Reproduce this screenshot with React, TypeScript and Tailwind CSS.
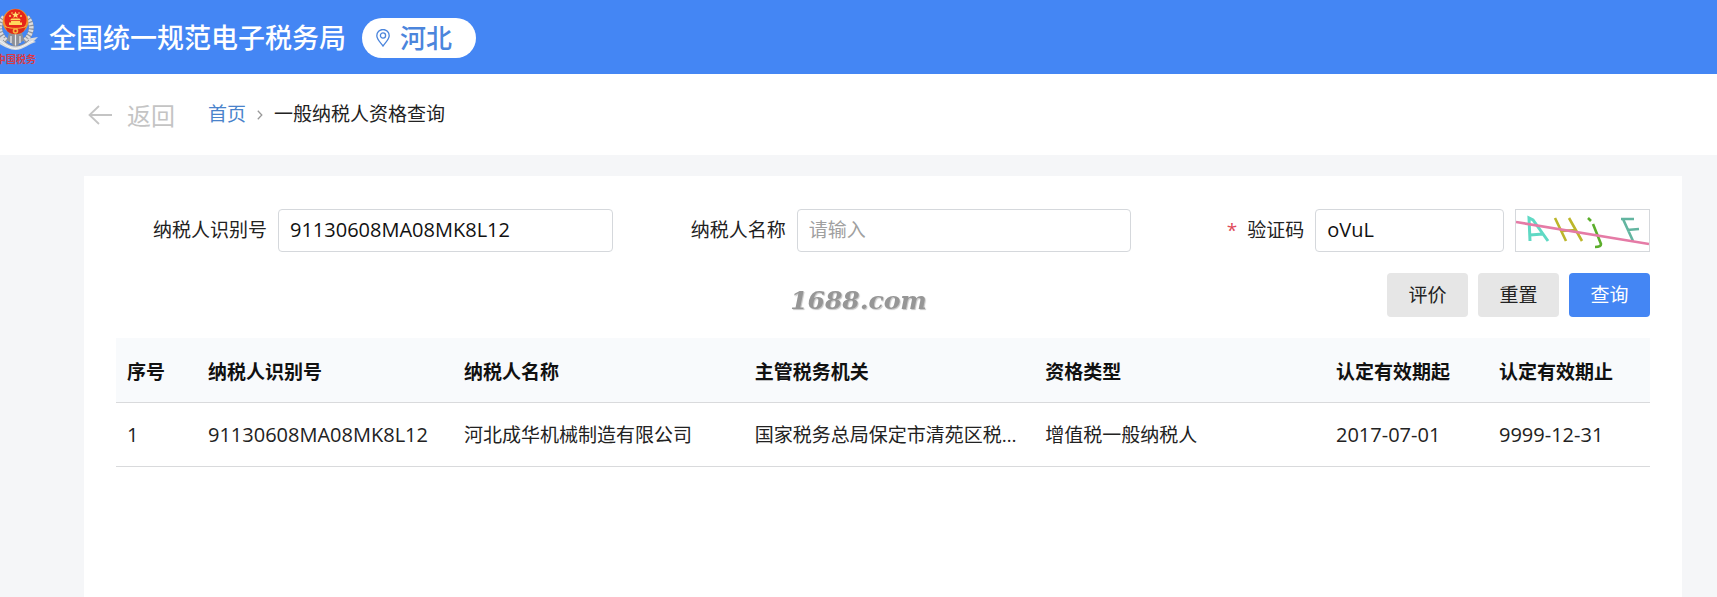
import { useState } from "react";

const columns = [
  { label: "序号", width: "w-[81px]" },
  { label: "纳税人识别号", width: "w-64" },
  { label: "纳税人名称", width: "" },
  { label: "主管税务机关", width: "" },
  { label: "资格类型", width: "" },
  { label: "认定有效期起", width: "w-[163px]" },
  { label: "认定有效期止", width: "w-[162px]" },
];

const rows = [
  [
    "1",
    "91130608MA08MK8L12",
    "河北成华机械制造有限公司",
    "国家税务总局保定市清苑区税务局",
    "增值税一般纳税人",
    "2017-07-01",
    "9999-12-31",
  ],
];

function Emblem() {
  return (
    <svg viewBox="0 0 40 74" className="h-[74px] w-10" role="img" aria-label="中国税务">
      <g fill="none">
        <path d="M4 17C-3 25-1 35 7 41" stroke="#8f9299" strokeWidth="5" />
        <path d="M27 17C34 25 32 35 24 41" stroke="#8f9299" strokeWidth="5" />
        <path d="M4 17C-3 25-1 35 7 41" stroke="#dcdde1" strokeWidth="4.500" strokeDasharray="2.200 1.200" />
        <path d="M27 17C34 25 32 35 24 41" stroke="#dcdde1" strokeWidth="4.500" strokeDasharray="2.200 1.200" />
      </g>
      <path d="M9 33H22L24 40 15.500 47 7 40Z" fill="#8e9198" />
      <path d="M15.500 34V47M11 36V43M20 36V43" stroke="#e9eaed" strokeWidth="1.200" />
      <path d="M-6 37 5 38 3 40C7 44 11 46 15.500 46S25 44 29 40L26 39 38 37 34 41 36 42C30 43 23 50 15.500 50S1 44-5 42Z" fill="#d9dadd" />
      <path d="M0 41C6 45 10 48.500 15.500 48.500S26 44 33 41" stroke="#f6f6f7" strokeWidth="1" fill="none" />
      <path d="M3 40C7 44 11 46 15.500 46S25 44 29 40" stroke="#7f828a" strokeWidth=".8" fill="none" />
      <circle cx="15.500" cy="21.500" r="12.800" fill="#f0922e" />
      <circle cx="15.500" cy="20.300" r="11" fill="#e6261a" />
      <path d="m15.500 11.500 1 2.200 2.400.2-1.800 1.600.5 2.400-2.100-1.300-2.100 1.300.5-2.400-1.800-1.600 2.400-.2Z" fill="#ffe070" />
      <g fill="#ffd75c">
        <circle cx="10" cy="16" r="1" />
        <circle cx="21" cy="16" r="1" />
        <circle cx="12" cy="13" r=".8" />
        <circle cx="19" cy="13" r=".8" />
        <path d="M11.500 18.500h8l1.500 1.800H10ZM11 21h9v1.500h2v2.500H9v-2.500h2Z" />
      </g>
      <path d="M5 27c6 2.500 15 2.500 21 0l-2.500 4.500c-5 3.500-11 3.500-16 0Z" fill="#dd2a1b" />
      <path d="M5 26.500c6 2.500 15 2.500 21 0" stroke="#f8b23f" strokeWidth="1" fill="none" />
      <circle cx="15.500" cy="31" r="2.800" fill="#f8b23f" />
      <circle cx="15.500" cy="31" r="1.200" fill="#dd2a1b" />
      <text x="-4" y="63" fontSize="10" fontWeight="700" fill="#d93a45" fontFamily="'Noto Sans CJK SC', sans-serif">
        中国税务
      </text>
    </svg>
  );
}

function Captcha() {
  return (
    <svg viewBox="0 0 133 41" className="h-full w-full" role="img" aria-label="验证码图片">
      <g fill="none" strokeWidth="2.600">
        <path d="M14 31 13 8 17 10 32 31M14 25 27 24" stroke="#5fd9c4" strokeWidth="3" />
        <path d="m39 8 11 23M53 8l13 23M46 21l14-1" stroke="#bcb62a" />
        <path d="m72 8 3 3M77 14l8 20q0 3-6 3" stroke="#5cae2c" strokeWidth="2.600" />
        <path d="M105 9h13M107 9l10 22M111 20l12-1" stroke="#62b5a0" />
        <path d="M0 12 133 34" stroke="#e57ba6" />
      </g>
    </svg>
  );
}

const inputClass =
  "h-[43px] w-full min-w-0 rounded border border-[#d5d8dc] bg-white px-[11px] pb-0.5 text-xl text-[#111] outline-none placeholder:text-[19px] placeholder:text-[#a0a0a0]";
const fieldClass = "flex items-center gap-[11px]";
const labelClass = "w-[151px] shrink-0 text-right text-[19px] text-[#222]";
const buttonClass = "h-11 w-[81px] rounded text-[19px]";

export default function App() {
  const [taxId, setTaxId] = useState("91130608MA08MK8L12");
  const [name, setName] = useState("");
  const [code, setCode] = useState("oVuL");

  const reset = () => {
    setTaxId("");
    setName("");
    setCode("");
  };

  return (
    <div className="flex min-h-screen flex-col bg-[#f5f6f8] font-['Open_Sans','Noto_Sans_CJK_SC',sans-serif] text-[#222]">
      <header className="flex h-[74px] items-center bg-[#4486f4]">
        <Emblem />
        <h1 className="ml-[9px] pt-0.5 text-[27px] leading-10 font-medium text-white">全国统一规范电子税务局</h1>
        <button className="mt-0.5 ml-4 flex h-10 items-center gap-2.5 rounded-full bg-white pr-6 pl-3.5 text-[26px] font-medium text-[#4b85dc]">
          <svg viewBox="0 0 14 18" className="h-[18px] w-3.5" fill="none" stroke="currentColor" strokeWidth="1.300">
            <path d="M7 17C4 13 .8 10 .8 6.700a6.200 6.200 0 0 1 12.400 0C13.200 10 10 13 7 17Z" />
            <circle cx="7" cy="6.500" r="2.600" />
          </svg>
          河北
        </button>
      </header>

      <nav className="flex h-[81px] items-center bg-white pl-[88px] text-[19px]">
        <a href="#back" className="flex items-center gap-[15px] text-2xl text-[#c4c4c4]">
          <svg viewBox="0 0 24 20" className="h-5 w-6" fill="none" stroke="currentColor" strokeWidth="1.800">
            <path d="M24 10H1.500M11 1 1.500 10 11 19" />
          </svg>
          <span className="pt-0.5">返回</span>
        </a>
        <a href="#home" className="ml-[33px] text-[#4a83cb]">首页</a>
        <svg viewBox="0 0 6 10" className="mx-[11px] h-2.5 w-1.5" fill="none" stroke="#999" strokeWidth="1.300">
          <path d="m.8.800 4 4.200-4 4.200" />
        </svg>
        <span>一般纳税人资格查询</span>
      </nav>

      <main className="mt-[21px] mr-[35px] ml-[84px] grow bg-white px-8 pt-[33px]">
        <form onSubmit={(e) => e.preventDefault()}>
          <div className="grid grid-cols-3 gap-[22px]">
            <div className={fieldClass}>
              <label htmlFor="tax-id" className={labelClass}>纳税人识别号</label>
              <input id="tax-id" className={inputClass} value={taxId} onChange={(e) => setTaxId(e.target.value)} />
            </div>
            <div className={fieldClass}>
              <label htmlFor="name" className={labelClass}>纳税人名称</label>
              <input
                id="name"
                className={inputClass}
                placeholder="请输入"
                value={name}
                onChange={(e) => setName(e.target.value)}
              />
            </div>
            <div className={fieldClass}>
              <label htmlFor="code" className={labelClass}>
                <span className="mr-2.5 text-[#e04a5a]">*</span>验证码
              </label>
              <input id="code" className={inputClass} value={code} onChange={(e) => setCode(e.target.value)} />
              <button type="button" className="h-[43px] w-[135px] shrink-0 border border-[#d5d8dc] bg-white">
                <Captcha />
              </button>
            </div>
          </div>
          <div className="mt-[21px] flex justify-end gap-2.5">
            <button type="button" className={`${buttonClass} bg-[#e6e6e6]`}>评价</button>
            <button type="button" onClick={reset} className={`${buttonClass} bg-[#e6e6e6]`}>重置</button>
            <button type="submit" className={`${buttonClass} bg-[#4486f4] text-white`}>查询</button>
          </div>
        </form>

        <table className="mt-[21px] w-full table-fixed text-left">
          <thead>
            <tr className="h-16 border-b border-[#d9dadc] bg-[#f8fafc] text-[19px] text-[#111]">
              {columns.map((column) => (
                <th key={column.label} className={`${column.width} px-[11px] pt-1 font-bold`}>{column.label}</th>
              ))}
            </tr>
          </thead>
          <tbody>
            {rows.map((row) => (
              <tr key={row[0]} className="h-16 border-b border-[#d9dadc]">
                {row.map((cell, index) => (
                  <td
                    key={columns[index].label}
                    className={`${index > 1 && index < 5 ? "text-[19px]" : "text-xl"} truncate px-[11px] pt-0.5`}
                  >
                    {cell}
                  </td>
                ))}
              </tr>
            ))}
          </tbody>
        </table>
      </main>

      <div className="pointer-events-none fixed inset-0 flex items-center justify-center pt-1">
        <span className="font-['DejaVu_Serif',serif] text-[25px] font-bold text-[#969696] italic [text-shadow:1px_1px_1px_#c4c4c4]">
          1688.com
        </span>
      </div>
    </div>
  );
}
